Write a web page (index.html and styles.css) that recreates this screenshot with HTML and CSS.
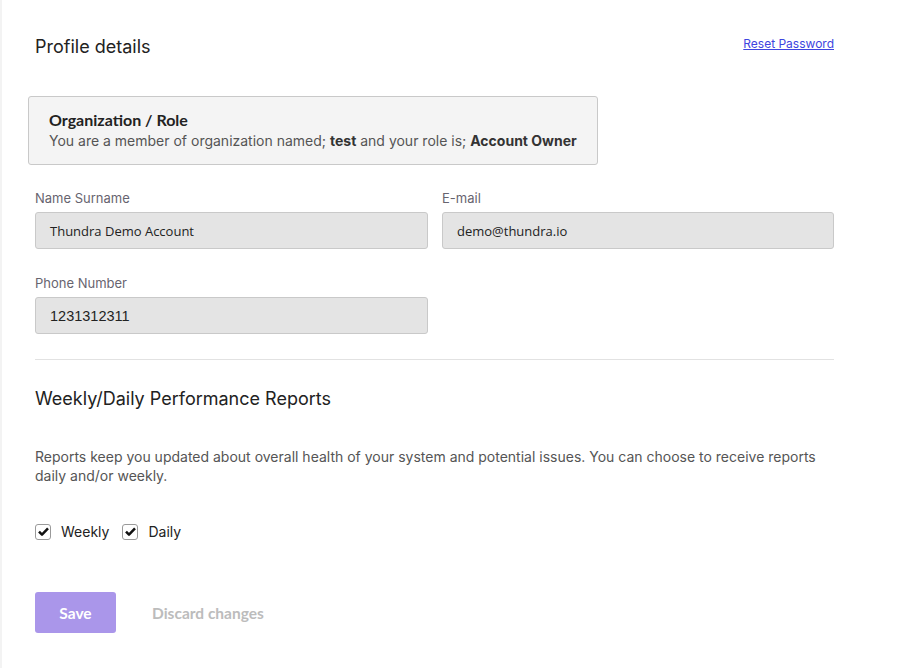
FILE: index.html
```html
<!DOCTYPE html>
<html>
<head>
<meta charset="utf-8">
<link rel="stylesheet" href="styles.css">
</head>
<body>
<div class="page">
  <div class="header">
    <h1 class="title">Profile details</h1>
    <a class="reset" href="#">Reset Password</a>
  </div>
  <div class="org">
    <div class="org-title">Organization / Role</div>
    <div class="org-text">You are a member of organization named; <b>test</b> and your role is; <b>Account Owner</b></div>
  </div>
  <div class="fields">
    <div class="field">
      <div class="label">Name Surname</div>
      <div class="input">Thundra Demo Account</div>
    </div>
    <div class="field">
      <div class="label">E-mail</div>
      <div class="input">demo@thundra.io</div>
    </div>
    <div class="field">
      <div class="label">Phone Number</div>
      <div class="input mono">1231312311</div>
    </div>
  </div>
  <hr class="divider">
  <h2 class="title sub">Weekly/Daily Performance Reports</h2>
  <p class="desc">Reports keep you updated about overall health of your system and potential issues. You can choose to receive reports daily and/or weekly.</p>
  <div class="checks">
    <label class="check"><span class="box"><svg width="11" height="9" viewBox="0 0 11 9"><path d="M1 4.6 L4 7.6 L10 1.4" fill="none" stroke="#111" stroke-width="2.5" stroke-linejoin="round"/></svg></span>Weekly</label>
    <label class="check"><span class="box"><svg width="11" height="9" viewBox="0 0 11 9"><path d="M1 4.6 L4 7.6 L10 1.4" fill="none" stroke="#111" stroke-width="2.5" stroke-linejoin="round"/></svg></span>Daily</label>
  </div>
  <div class="actions">
    <button class="save">Save</button>
    <button class="discard">Discard changes</button>
  </div>
</div>
</body>
</html>
```
FILE: styles.css
```css
html, body {
  margin: 0;
  padding: 0;
  background: #fff;
}
body {
  font-family: Inter, "Liberation Sans", sans-serif;
  color: #222;
  border-left: 2px solid #f3f3f3;
  min-height: 668px;
  box-sizing: border-box;
}
.page {
  width: 799px;
  padding: 36px 0 0 33px;
}
.header {
  display: flex;
  justify-content: space-between;
  align-items: flex-start;
}
.title {
  margin: 0;
  font-size: 18px;
  font-weight: 400;
  color: #222;
  line-height: 22px;
}
.reset {
  font-size: 12px;
  color: #3e45e0;
  text-decoration: underline;
  margin-top: 0;
  line-height: 16px;
}
.org {
  margin: 38px 0 0 -7px;
  width: 570px;
  height: 69px;
  border: 1px solid #c9c9c9;
  border-radius: 3px;
  background: #f4f4f4;
  padding: 0 0 0 20px;
  box-sizing: border-box;
  display: flex;
  flex-direction: column;
  justify-content: center;
}
.org-title {
  font-family: Lato, sans-serif;
  font-weight: 700;
  font-size: 16px;
  color: #222;
  line-height: 21px;
  margin-top: -1px;
}
.org-text {
  font-size: 14px;
  color: #555;
  line-height: 21px;
}
.org-text b {
  color: #333;
  font-weight: 700;
}
.fields {
  display: grid;
  grid-template-columns: 393px 392px;
  column-gap: 14px;
  row-gap: 26px;
  margin-top: 25px;
}
.label {
  font-size: 13px;
  color: #67646f;
  line-height: 16px;
  margin-bottom: 6px;
}
.input {
  height: 37px;
  box-sizing: border-box;
  border: 1px solid #c9c9c9;
  border-radius: 3px;
  background: #e4e4e4;
  padding: 0 14px;
  display: flex;
  align-items: center;
  font-family: "Open Sans", Lato, sans-serif;
  font-size: 13px;
  color: #222;
}
.input.mono {
  font-family: "Liberation Sans", Arial, sans-serif;
  font-size: 14.5px;
}
.divider {
  margin: 25px 0 0 0;
  border: 0;
  border-top: 1px solid #e2e2e2;
  height: 0;
}
.sub {
  margin-top: 28px;
}
.desc {
  margin: 37px 0 0 0;
  font-size: 14px;
  line-height: 19px;
  color: #555;
}
.checks {
  display: flex;
  gap: 13px;
  margin-top: 38px;
}
.check {
  display: flex;
  align-items: center;
  font-size: 14px;
  color: #222;
}
.box {
  width: 16px;
  height: 16px;
  box-sizing: border-box;
  border: 1px solid #9a9a9a;
  border-radius: 3px;
  background: #fff;
  margin-right: 10px;
  display: flex;
  align-items: center;
  justify-content: center;
}
.box svg {
  display: block;
}
.actions {
  display: flex;
  align-items: center;
  margin-top: 52px;
}
.save {
  width: 81px;
  height: 41px;
  border: 0;
  border-radius: 3px;
  background: #aa96ea;
  color: #fff;
  font-family: Lato, sans-serif;
  font-weight: 700;
  font-size: 15.5px;
  padding: 0;
}
.discard {
  border: 0;
  background: none;
  margin-left: 36px;
  padding: 0;
  color: #bcbcbc;
  font-family: Lato, sans-serif;
  font-weight: 700;
  font-size: 15.5px;
}
```
